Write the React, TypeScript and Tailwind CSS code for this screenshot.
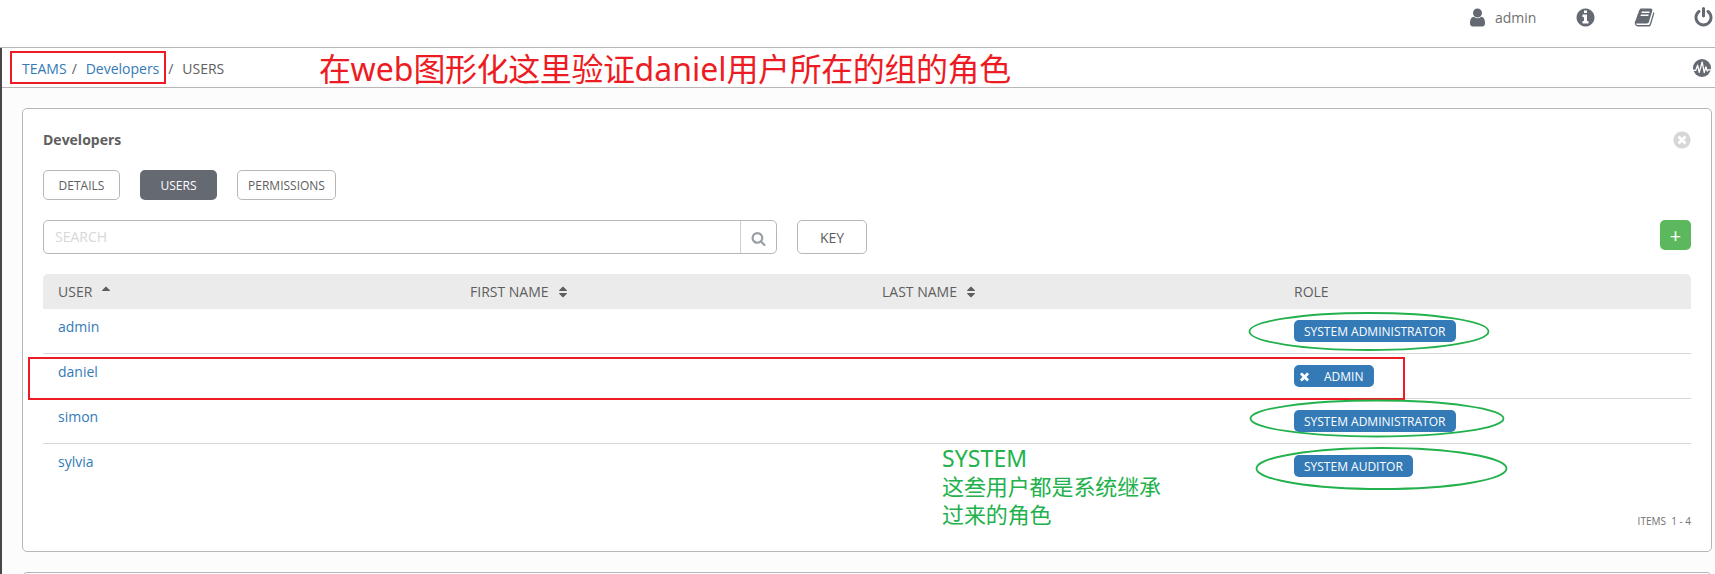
import React from "react";

const circle =
  "M1664 896q0 209-103 385.5t-279.5 279.5-385.5 103-385.5-103-279.5-279.5-103-385.5 103-385.5 279.5-279.5 385.5-103 385.5 103 279.5 279.5 103 385.5z";

const icons = {
  user: "M1536 1399q0 109-62.5 187t-150.5 78h-854q-88 0-150.5-78t-62.5-187q0-85 8.5-160.5t31.5-152 58.5-131 94-89 134.5-34.5q131 128 313 128t313-128q76 0 134.5 34.5t94 89 58.5 131 31.5 152 8.5 160.5zm-256-887q0 159-112.5 271.5t-271.5 112.5-271.5-112.5-112.5-271.5 112.5-271.5 271.5-112.5 271.5 112.5 112.5 271.5z",
  info:
    "M1152 1376v-160q0-14-9-23t-23-9h-96v-512q0-14-9-23t-23-9h-320q-14 0-23 9t-9 23v160q0 14 9 23t23 9h96v320h-96q-14 0-23 9t-9 23v160q0 14 9 23t23 9h448q14 0 23-9t9-23zm-128-896v-160q0-14-9-23t-23-9h-192q-14 0-23 9t-9 23v160q0 14 9 23t23 9h192q14 0 23-9t9-23z" +
    circle,
  book: "M1703 478q40 57 18 129l-275 906q-19 64-76.5 107.5t-122.5 43.5h-923q-77 0-148.5-53.5t-99.5-131.5q-24-67-2-127 0-4 3-27t4-37q1-8-3-21.5t-3-19.5q2-11 8-21t16.5-23.5 16.5-23.5q23-38 45-91.5t30-91.5q3-10 .5-30t-.5-28q3-11 17-28t17-23q21-36 42-92t25-90q1-9-2.5-32t.5-28q4-13 22-30.5t22-22.5q19-26 42.5-84.5t27.5-96.5q1-8-3-25.5t-2-26.5q2-8 9-18t18-23 17-21q8-12 16.5-30.5t15-35 16-36 19.5-32 26.5-23.5 36-11.5 47.5 5.5l-1 3q38-9 51-9h761q74 0 114 56t18 130l-274 906q-36 119-71.5 153.5t-128.5 34.5h-869q-27 0-38 15-11 16-1 43 24 70 144 70h923q29 0 56-15.5t35-41.5l300-987q7-22 5-57 38 15 59 43zm-1064 2q-4 13 2 22.5t20 9.5h608q13 0 25.5-9.5t16.5-22.5l21-64q4-13-2-22.5t-20-9.5h-608q-13 0-25.5 9.5t-16.5 22.5zm-83 256q-4 13 2 22.5t20 9.5h608q13 0 25.5-9.5t16.5-22.5l21-64q4-13-2-22.5t-20-9.5h-608q-13 0-25.5 9.5t-16.5 22.5z",
  power:
    "M1664 896q0 156-61 298t-164 245-245 164-298 61-298-61-245-164-164-245-61-298q0-182 80.5-343t226.5-270q43-32 95.5-25t83.5 50q32 42 24.5 94.5t-49.5 84.5q-98 74-151.5 181t-53.5 228q0 104 40.5 198.5t109.5 163.5 163.5 109.5 198.5 40.5 198.5-40.5 163.5-109.5 109.5-163.5 40.5-198.5q0-121-53.5-228t-151.5-181q-42-32-49.5-84.5t24.5-94.5q31-43 84-50t95 25q146 109 226.5 270t80.5 343zm-640-768v640q0 52-38 90t-90 38-90-38-38-90v-640q0-52 38-90t90-38 90 38 38 90z",
  close:
    "M1277 1122q0-26-19-45l-181-181 181-181q19-19 19-45 0-27-19-46l-90-90q-19-19-46-19-26 0-45 19l-181 181-181-181q-19-19-45-19-27 0-46 19l-90 90q-19 19-19 46 0 26 19 45l181 181-181 181q-19 19-19 45 0 27 19 46l90 90q19 19 46 19 26 0 45-19l181-181 181 181q19 19 45 19 27 0 46-19l90-90q19-19 19-46z" +
    circle,
  times:
    "M1490 1322q0 40-28 68l-136 136q-28 28-68 28t-68-28l-294-294-294 294q-28 28-68 28t-68-28l-136-136q-28-28-28-68t28-68l294-294-294-294q-28-28-28-68t28-68l136-136q28-28 68-28t68 28l294 294 294-294q28-28 68-28t68 28l136 136q28 28 28 68t-28 68l-294 294 294 294q28 28 28 68z",
  search:
    "M1216 832q0-185-131.5-316.5t-316.5-131.5-316.5 131.5-131.5 316.5 131.5 316.5 316.5 131.5 316.5-131.5 131.5-316.5zm512 832q0 52-38 90t-90 38q-54 0-90-38l-343-342q-179 124-399 124-143 0-273.5-55.5t-225-150-150-225-55.5-273.5 55.5-273.5 150-225 225-150 273.5-55.5 273.5 55.5 225 150 150 225 55.5 273.5q0 220-124 399l343 343q37 37 37 90z",
  sort: "M1408 1088q0 26-19 45l-448 448q-19 19-45 19t-45-19l-448-448q-19-19-19-45t19-45 45-19h896q26 0 45 19t19 45zm0-384q0 26-19 45t-45 19h-896q-26 0-45-19t-19-45 19-45l448-448q19-19 45-19t45 19l448 448q19 19 19 45z",
  sortUp:
    "M1408 704q0 26-19 45t-45 19h-896q-26 0-45-19t-19-45 19-45l448-448q19-19 45-19t45 19l448 448q19 19 19 45z",
};

function Icon({ name, className }: { name: keyof typeof icons; className: string }) {
  return (
    <svg viewBox="0 0 1792 1792" fill="currentColor" fillRule="evenodd" className={"shrink-0 " + className}>
      <path d={icons[name]} />
    </svg>
  );
}

const users = [
  { name: "admin", role: "SYSTEM ADMINISTRATOR", removable: false },
  { name: "daniel", role: "ADMIN", removable: true },
  { name: "simon", role: "SYSTEM ADMINISTRATOR", removable: false },
  { name: "sylvia", role: "SYSTEM AUDITOR", removable: false },
];

function TopBar() {
  return (
    <header className="flex h-12 items-start justify-end border-b border-[#b7b7b7] bg-white pr-[2px] text-[#646972]">
      <div className="flex h-[35px] items-center">
        <Icon name="user" className="mr-[7px] size-[21px]" />
        <span className="w-[41px] text-[#707070]">admin</span>
        <Icon name="info" className="ml-[39px] size-[21px]" />
        <Icon name="book" className="ml-[38px] size-[21px]" />
        <Icon name="power" className="-mr-px ml-[38px] size-[21px]" />
      </div>
    </header>
  );
}

function Breadcrumbs() {
  return (
    <nav className="flex h-10 items-center border-b border-[#b7b7b7] bg-white pt-px pr-1 pl-5">
      <div className="flex pt-px">
        <a className="text-[#337ab7]">TEAMS</a>
        <span className="ml-[5px] w-[14px]">/</span>
        <a className="text-[#337ab7]">Developers</a>
        <span className="ml-[9px] w-[14px]">/</span>
        <span>USERS</span>
      </div>
      <svg viewBox="0 0 18 18" className="ml-auto size-[18px]">
        <circle cx="9" cy="9" r="9" fill="#646972" />
        <path
          d="M0 11.3h2.8L4.6 6.2l1.6 7.2L9.2 3l2 10.5 1.7-5.7 1.3 4.2 1-1.2H18"
          fill="none"
          stroke="#fff"
          strokeWidth="1.3"
          strokeLinejoin="round"
        />
      </svg>
    </nav>
  );
}

function Toolbar() {
  return (
    <div className="mt-5 flex h-[34px] items-start">
      <div className="flex h-[34px] w-[734px] items-center rounded-[5px] border border-[#b7b7b7]">
        <span className="flex-1 pl-[11px] text-[#d7d7d7]">SEARCH</span>
        <span className="flex h-full w-9 items-center justify-center border-l border-[#d0d0d0] text-[#999da5]">
          <Icon name="search" className="mt-[3px] size-[15px]" />
        </span>
      </div>
      <button className="ml-5 h-[34px] w-[70px] rounded-[5px] border border-[#b7b7b7] pt-0.5">KEY</button>
      <button className="ml-auto h-[30px] w-[31px] rounded-[5px] bg-[#5cb85c] pt-px text-xl leading-[29px] text-white">
        +
      </button>
    </div>
  );
}

function UserTable() {
  return (
    <section className="mt-5">
      <div className="grid h-[35px] grid-cols-4 items-center rounded-t-[5px] bg-[#ebebeb] pt-px">
        <div className="flex items-center pl-[15px]">
          USER
          <Icon name="sortUp" className="ml-[7px] size-[14px]" />
        </div>
        <div className="flex items-center pl-[15px]">
          FIRST NAME
          <Icon name="sort" className="ml-[7px] size-[14px]" />
        </div>
        <div className="flex items-center pl-[15px]">
          LAST NAME
          <Icon name="sort" className="ml-[7px] size-[14px]" />
        </div>
        <div className="pl-[15px]">ROLE</div>
      </div>
      {users.map((user) => (
        <div key={user.name} className="grid h-[45px] grid-cols-4 border-b border-[#d7d7d7] last:border-b-0">
          <a className="pt-2 pl-[15px] leading-5 text-[#337ab7]">{user.name}</a>
          <div className="col-start-4 pt-[11px] pl-[15px]">
            <span className="flex h-[22px] w-fit items-center rounded-[5px] bg-[#337ab7] pt-px pr-[10.5px] pl-2.5 text-xs text-white">
              {user.removable && <Icon name="times" className="mr-[13px] -ml-[6px] size-[13px]" />}
              {user.role}
            </span>
          </div>
        </div>
      ))}
    </section>
  );
}

function Annotations() {
  return (
    <div className="pointer-events-none absolute inset-0 font-['Noto_Sans','Noto_Sans_CJK_SC',sans-serif]">
      <div className="absolute top-[51px] left-[10px] h-[33px] w-[156px] border-2 border-[#ed1c24]" />
      <div className="absolute top-[357px] left-[28px] h-[43px] w-[1377px] border-2 border-[#ed1c24]" />
      <div className="absolute top-[46px] left-[319px] text-[32px] leading-[46px] tracking-[-0.42px] whitespace-nowrap text-[#ed1c24]">
        在<span className="tracking-normal">web</span>图形化这里验证<span className="tracking-normal">daniel</span>
        用户所在的组的角色
      </div>
      <div className="absolute top-[444px] left-[942px] text-[22px] leading-[28px] tracking-[-0.1px] whitespace-nowrap text-[#22b14c]">
        <span className="text-[23px] tracking-[0.1px]">SYSTEM</span>
        <br />
        这叁用户都是系统继承
        <br />
        过来的角色
      </div>
      <svg viewBox="0 0 1715 574" className="absolute inset-0 size-full" fill="none" stroke="#22b14c" strokeWidth="1.8">
        <ellipse cx="1369" cy="331.5" rx="119.5" ry="18.5" />
        <ellipse cx="1377" cy="418.5" rx="126.5" ry="18" />
        <ellipse cx="1381.5" cy="468.5" rx="125" ry="20.5" />
      </svg>
    </div>
  );
}

export default function App() {
  return (
    <div className="relative h-[574px] w-[1715px] overflow-hidden bg-[#fcfcfc] font-['Open_Sans','Noto_Sans',sans-serif] text-sm text-[#5e5e5e]">
      <TopBar />
      <div className="h-[526px] border-l-2 border-[#484848]">
        <Breadcrumbs />
        <main className="pr-[3px] pl-5">
          <section className="mt-5 flex h-[444px] flex-col rounded-[5px] border border-[#b7b7b7] bg-white px-5">
            <div className="mt-5 flex h-[21px] items-center justify-between">
              <h1 className="font-bold">Developers</h1>
              <Icon name="close" className="-mr-px size-5 text-[#d7d7d7]" />
            </div>
            <div className="mt-5 flex gap-5 text-xs">
              <button className="h-[30px] w-[77px] rounded-[5px] border border-[#b7b7b7] pt-0.5">DETAILS</button>
              <button className="h-[30px] w-[77px] rounded-[5px] bg-[#646972] pt-0.5 text-white">USERS</button>
              <button className="h-[30px] w-[99px] rounded-[5px] border border-[#b7b7b7] pt-0.5">PERMISSIONS</button>
            </div>
            <Toolbar />
            <UserTable />
            <div className="mt-[22px] text-right text-[10px] leading-5 whitespace-pre text-[#707070]">ITEMS  1 - 4</div>
          </section>
          <section className="mt-5 h-10 rounded-[5px] border border-[#b7b7b7] bg-white" />
        </main>
      </div>
      <Annotations />
    </div>
  );
}
